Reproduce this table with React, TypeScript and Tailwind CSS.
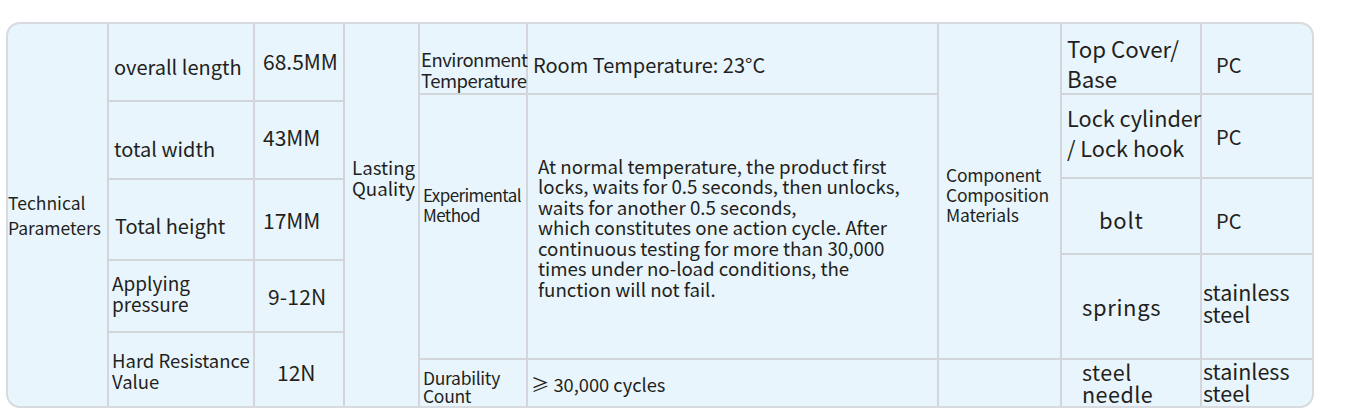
const cell = "bg-[#e9f5fc] flex items-center whitespace-nowrap";

export default function App() {
  return (
    <div className="min-h-screen bg-white pt-[22px] pl-[6px] font-['Noto_Sans_CJK_SC',sans-serif] text-[#231f20]">
      <div className="w-[1308px] h-[386px] rounded-[14px] border-2 border-[#d7dade] bg-[#d2d5d9] overflow-hidden flex gap-[2px]">
        {/* technical parameters */}
        <div className="grid grid-cols-[99px_144px_88px] grid-rows-[76px_76px_79px_70px_73px] gap-[2px]">
          <div className={`${cell} row-span-5 text-[17.5px] leading-[25px]`}>
            <div>Technical<br />Parameters</div>
          </div>
          <div className={`${cell} pl-[5px] pt-[10px] text-[20px] leading-[26px]`}>overall length</div>
          <div className={`${cell} pl-[8px] pb-[2px] text-[21px] leading-[26px]`}>68.5MM</div>
          <div className={`${cell} pl-[5px] pt-[18px] text-[20px] leading-[26px]`}>total width</div>
          <div className={`${cell} pl-[8px] pb-[6px] text-[21px] leading-[26px]`}>43MM</div>
          <div className={`${cell} pl-[6px] pt-[13px] text-[20px] leading-[26px]`}>Total height</div>
          <div className={`${cell} pl-[8px] text-[21px] leading-[26px]`}>17MM</div>
          <div className={`${cell} pl-[3px] pb-[6px] text-[19px] leading-[21px]`}>
            <div>Applying<br />pressure</div>
          </div>
          <div className={`${cell} pl-[13px] text-[21px] leading-[26px] tracking-[0.2px]`}>9-12N</div>
          <div className={`${cell} pl-[3px] pt-[3px] text-[18.5px] leading-[21px]`}>
            <div>Hard Resistance<br />Value</div>
          </div>
          <div className={`${cell} pl-[22px] pt-[4px] text-[21px] leading-[26px]`}>12N</div>
        </div>

        {/* lasting quality */}
        <div className="grid grid-cols-[73px_106px_409px] grid-rows-[69px_263px_46px] gap-[2px]">
          <div className={`${cell} row-span-3 pl-[7px] pb-[77px] text-[18.7px] leading-[21px]`}>
            <div>Lasting<br />Quality</div>
          </div>
          <div className={`${cell} pl-[1px] pt-[22px] text-[18.5px] leading-[21px] tracking-[-0.5px]`}>
            <div>Environment<br />Temperature</div>
          </div>
          <div className={`${cell} pl-[5px] pt-[13px] text-[20px] leading-[26px]`}>Room Temperature: 23°C</div>
          <div className={`${cell} pl-[3px] pb-[43px] text-[17px] leading-[20px] tracking-[-0.6px]`}>
            <div>Experimental<br />Method</div>
          </div>
          <div className={`${cell} pl-[10px] pt-[2px] text-[18.7px] leading-[20.5px]`}>
            <div>
              At normal temperature, the product first<br />
              locks, waits for 0.5 seconds, then unlocks,<br />
              waits for another 0.5 seconds,<br />
              which constitutes one action cycle. After<br />
              continuous testing for more than 30,000<br />
              times under no-load conditions, the<br />
              function will not fail.
            </div>
          </div>
          <div className={`${cell} pl-[3px] pt-[8px] text-[17.5px] leading-[18px] tracking-[-0.3px]`}>
            <div>Durability<br />Count</div>
          </div>
          <div className={`${cell} pl-[3px] pt-[2px] text-[18.3px] leading-[24px]`}>≥ 30,000 cycles</div>
        </div>

        {/* materials */}
        <div className="grid flex-1 grid-cols-[121px_138px_1fr] grid-rows-[69px_82px_74px_103px_46px] gap-[2px]">
          <div className={`${cell} row-span-4 pl-[7px] pt-[8px] text-[17.5px] leading-[20px] tracking-[-0.2px]`}>
            <div>Component<br />Composition<br />Materials</div>
          </div>
          <div className={`${cell} pl-[5px] pt-[9px] text-[22.3px] leading-[30px]`}>
            <div>Top Cover/<br />Base</div>
          </div>
          <div className={`${cell} pl-[14px] pt-[12px] text-[20px] leading-[26px]`}>PC</div>
          <div className={`${cell} pl-[5px] pb-[6px] text-[21.7px] leading-[30px]`}>
            <div>Lock cylinder<br />/ Lock hook</div>
          </div>
          <div className={`${cell} pl-[14px] pt-[1px] text-[20px] leading-[26px]`}>PC</div>
          <div className={`${cell} pl-[37px] pt-[5px] text-[22px] leading-[26px] tracking-[0.75px]`}>bolt</div>
          <div className={`${cell} pl-[14px] pt-[9px] text-[20px] leading-[26px]`}>PC</div>
          <div className={`${cell} pl-[20px] pb-[1px] text-[22px] leading-[26px] tracking-[0.65px]`}>springs</div>
          <div className={`${cell} pl-[1px] pb-[8px] text-[21.5px] leading-[22px]`}>
            <div>stainless<br />steel</div>
          </div>
          <div className={cell} />
          <div className={`${cell} pl-[20px] text-[21.5px] leading-[22px] tracking-[0.5px]`}>
            <div>steel<br />needle</div>
          </div>
          <div className={`${cell} pl-[1px] pb-[3px] text-[21.5px] leading-[22px]`}>
            <div>stainless<br />steel</div>
          </div>
        </div>
      </div>
    </div>
  );
}
